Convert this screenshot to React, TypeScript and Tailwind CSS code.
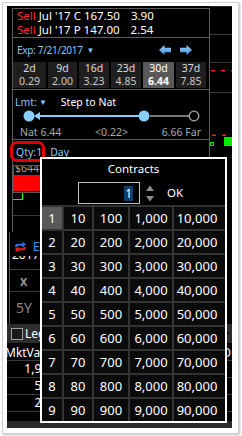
import React from 'react';

const DAYS = [
  { d: '2d', v: '0.29', w: 'w-[33px]' },
  { d: '9d', v: '2.00', w: 'w-[29px]' },
  { d: '16d', v: '3.23', w: 'w-[30px]' },
  { d: '23d', v: '4.85', w: 'w-[30px]' },
  { d: '30d', v: '6.44', w: 'w-[31px]', sel: true },
  { d: '37d', v: '7.85', w: 'w-[30px]' },
];

const ROWS = [1, 2, 3, 4, 5, 6, 7, 8, 9].map((n) => [n, n * 10, n * 100, n * 1000, n * 10000]);

function ExpArrow({ dir }: { dir: 'left' | 'right' }) {
  return (
    <svg width="12" height="10" viewBox="0 0 12 10" className={dir === 'right' ? 'scale-x-[-1]' : ''}>
      <defs>
        <linearGradient id={`ag-${dir}`} x1="0" y1="0" x2="0" y2="1">
          <stop offset="0" stopColor="#9fd3ff" />
          <stop offset="1" stopColor="#3d8fe0" />
        </linearGradient>
      </defs>
      <path d="M0 5 L5.5 0 V2.8 H12 V7.2 H5.5 V10 Z" fill={`url(#ag-${dir})`} />
    </svg>
  );
}

function Slider() {
  return (
    <svg width="196" height="12" viewBox="0 0 196 12" className="block">
      <line x1="26" y1="6" x2="131" y2="6" stroke="#87cefa" strokeWidth="2" />
      <path d="M21 6 L27 2 V10 Z" fill="#87cefa" />
      <circle cx="16" cy="6" r="5.5" fill="#87cefa" />
      <circle cx="131" cy="6" r="5.5" fill="#87cefa" />
      <line x1="137" y1="6" x2="176" y2="6" stroke="#a0a0a0" strokeWidth="1.5" />
      <circle cx="181" cy="6" r="4.8" fill="#000" stroke="#a8a8a8" strokeWidth="1.3" />
    </svg>
  );
}

function ChartStrip() {
  return (
    <svg width="22" height="157" viewBox="0 0 22 157" className="block">
      <line x1="0" y1="0.5" x2="22" y2="0.5" stroke="#2a2a2a" />
      <line x1="0" y1="28.5" x2="22" y2="28.5" stroke="#3a3a3a" />
      <line x1="0" y1="56.5" x2="22" y2="56.5" stroke="#3a3a3a" />
      <line x1="0" y1="86.5" x2="22" y2="86.5" stroke="#3a3a3a" />
      <rect x="1" y="64" width="4" height="1.5" fill="#ff1a1a" />
      <rect x="11" y="64" width="4" height="1.5" fill="#ff1a1a" />
      <rect x="21" y="64" width="1" height="1.5" fill="#ff1a1a" />
      <rect x="2" y="128.5" width="4" height="1.5" fill="#ff1a1a" />
      <rect x="12" y="128.5" width="4" height="1.5" fill="#ff1a1a" />
      <rect x="0.5" y="136.5" width="3" height="3" fill="none" stroke="#00e000" />
      <rect x="14" y="131" width="8" height="9" fill="#00ee00" />
    </svg>
  );
}

function SwapIcon() {
  return (
    <svg width="16" height="16" viewBox="0 0 16 16" className="block">
      <path d="M1.5 8 V6 Q1.5 3.8 3.8 3.8 H10.5 V1 L15 5 L10.5 9 V6.3 H4.5 Q4 6.3 4 7 V8 Z" fill="#2f6fe8" />
      <path d="M14.5 8 V10 Q14.5 12.2 12.2 12.2 H5.5 V15 L1 11 L5.5 7 V9.7 H11.5 Q12 9.7 12 9 V8 Z" fill="#ee1c1c" />
    </svg>
  );
}

function TopSection() {
  return (
    <div className="flex h-[157px]">
      <div className="w-[5px]" />
      <div className="w-[198px] mt-[2px] border-t border-x border-[#5c5c5c] flex flex-col">
        <div className="h-[29px] border-b border-[#5c5c5c] pl-[4px] flex flex-col text-[11.5px]">
          <div className="h-[14px] flex items-center">
            <span className="text-[#ff2a2a]">Sell</span>
            <span className="ml-[3px]">Jul '17 C 167.50</span>
            <span className="ml-[11px]">3.90</span>
          </div>
          <div className="h-[14px] flex items-center">
            <span className="text-[#ff2a2a]">Sell</span>
            <span className="ml-[3px]">Jul '17 P 147.00</span>
            <span className="ml-[11px]">2.54</span>
          </div>
        </div>

        <div className="h-[52px] border-b border-[#5c5c5c] pt-[5px]">
          <div className="h-[14px] flex items-center pl-[4px]">
            <span className="text-[#86c6f0] text-[10px] tracking-[-0.3px]">Exp: 7/21/2017</span>
            <span className="ml-[4px] text-[#86c6f0] text-[8px]">▼</span>
            <div className="ml-auto mr-[17px] flex items-center gap-[9px]">
              <ExpArrow dir="left" />
              <ExpArrow dir="right" />
            </div>
          </div>
          <div className="mt-[5px] flex gap-[2px]">
            {DAYS.map((b) => (
              <div
                key={b.d}
                className={`${b.w} h-[26px] flex flex-col items-center ${
                  b.sel ? 'bg-[#5a5a5a]' : 'bg-[#1f1f1f]'
                }`}
              >
                <span className={`leading-[13px] ${b.sel ? 'text-white' : 'text-[#dcdcdc]'}`}>{b.d}</span>
                <span
                  className={`leading-[13px] ${b.sel ? 'text-white font-bold' : 'text-[#c8c8c8]'}`}
                >
                  {b.v}
                </span>
              </div>
            ))}
          </div>
        </div>

        <div className="h-[50px] border-b border-[#5c5c5c] pt-[5px]">
          <div className="h-[14px] flex items-center pl-[2px]">
            <span className="text-[#86c6f0]">Lmt:</span>
            <span className="ml-[2px] text-[#86c6f0] text-[8px]">▼</span>
            <span className="ml-[14px] text-white">Step to Nat</span>
          </div>
          <div className="mt-[1px]">
            <Slider />
          </div>
          <div className="mt-[3px] h-[14px] flex items-center justify-between pl-[7px] pr-[8px] text-[#a8a8a8]">
            <span>Nat 6.44</span>
            <span>&lt;0.22&gt;</span>
            <span>6.66 Far</span>
          </div>
        </div>

        <div className="pt-[5px]">
          <div className="relative h-[14px] flex items-center pl-[3px] text-[#86c6f0]">
            <span>Qty:1</span>
            <span className="ml-[8px]">Day</span>
            <div className="absolute left-[-3px] top-[-4px] w-[35px] h-[21px] border-[3px] border-[#e00000] rounded-[7px]" />
          </div>
        </div>
      </div>
      <ChartStrip />
    </div>
  );
}

function MiddleSection() {
  return (
    <div className="h-[161px] flex flex-col">
      <div className="h-[69px] ml-[5px] border-l border-[#5c5c5c] flex flex-col">
        <div className="mt-[2px] h-[28px] w-[28px] border border-[#555] overflow-hidden">
          <div className="h-[9px] overflow-hidden">
            <div className="-mt-[5px] pl-[1px] text-[#a0a0a0] leading-[14px] whitespace-nowrap">$644</div>
          </div>
          <div className="h-[16px] bg-[#ff0000]" />
        </div>
        <svg width="28" height="22" viewBox="0 0 28 22" className="block">
          <path d="M0 6.5 H9.5 V0" fill="none" stroke="#00ff00" strokeWidth="1.2" />
        </svg>
        <div className="w-[28px] flex-1 border-t border-[#3a3a3a]" />
      </div>
      <div className="flex-1 w-[31px] ml-[2px] border-l border-[#5c5c5c] flex flex-col">
        <div className="h-[24px] pt-[7px] pl-[4px] flex items-start overflow-hidden">
          <SwapIcon />
          <span className="ml-[6px] text-[#3d8fe8] text-[13px] leading-[14px]">E</span>
        </div>
        <div className="h-[6px] overflow-hidden pl-[2px]">
          <div className="-mt-[8px] leading-[14px] text-white text-[12px]">2017</div>
        </div>
        <div className="h-[8px] border-b border-[#3a3a3a]" />
        <div className="h-[22px] border-b border-[#3a3a3a] flex items-center pl-[10px] pt-[2px] text-[#9a9a9a] text-[11px] font-bold">
          X
        </div>
        <div className="flex-1 pl-[6px] pt-[8px] text-[#8a8a8a] text-[14px] leading-[16px]">5Y</div>
      </div>
    </div>
  );
}

function LegHeader() {
  return (
    <div className="h-[19px] bg-[#2d2d2d] flex items-center pl-[4px] pr-[1px]">
      <div className="w-[12px] h-[12px] border border-[#a0a0a0] bg-[#1a1a1a]" />
      <span className="ml-[2px] text-white text-[12px]">Leg</span>
      <span className="ml-auto text-[#111] text-[7px]">▼</span>
    </div>
  );
}

function MktTable() {
  const vals = ['1,944', '512', '287'];
  return (
    <div className="h-[78px] flex flex-col">
      <div className="h-[18px] border-b border-[#3a3a3a] flex items-end pb-[1px] pr-[1px]">
        <div className="w-[33px] overflow-hidden">
          <span className="block -ml-[2px] text-white text-[12px] whitespace-nowrap">MktVal</span>
        </div>
        <span className="ml-auto text-white text-[12px]">D</span>
      </div>
      {vals.map((v) => (
        <div key={v} className="h-[17px] border-b border-[#3a3a3a] flex items-center">
          <div className="w-[33px] overflow-hidden">
            <span className="block w-[48px] text-right text-white text-[12px]">{v}</span>
          </div>
        </div>
      ))}
      <div className="flex-1" />
    </div>
  );
}

function ContractsPopup() {
  return (
    <div className="absolute left-[33px] top-[151px] w-[187px] h-[266px] border-2 border-white bg-black text-white">
      <div className="mt-[2px] h-[16px] text-center text-[11.5px] leading-[16px]">Contracts</div>
      <div className="mt-[5px] h-[22px] flex items-center">
        <div className="ml-[36px] w-[62px] h-[22px] border border-[#c0c0c0] bg-black flex items-center justify-end pr-[6px]">
          <span className="bg-[#0f3d6d] text-white text-[12px] leading-[15px] px-[1px]">1</span>
        </div>
        <svg width="8" height="17" viewBox="0 0 8 17" className="ml-[6px] block">
          <path d="M0 6 L4 0.5 L8 6 Z" fill="#8c8c8c" />
          <path d="M0 11 L4 16.5 L8 11 Z" fill="#8c8c8c" />
        </svg>
        <span className="ml-[13px] text-[11.5px]">OK</span>
      </div>
      <div className="mt-[1px] bg-[#333333] pt-[2px] grid grid-cols-[20px_28px_34px_42px_51px] gap-[2px]">
        {ROWS.map((row, ri) =>
          row.map((n, ci) => (
            <div
              key={`${ri}-${ci}`}
              className={`h-[22px] flex items-center justify-center text-[13px] ${
                ri === 0 && ci === 0 ? 'bg-[#595959]' : 'bg-[#0a0a0a]'
              } ${ci === 4 ? 'pr-[5px]' : ''}`}
            >
              {n.toLocaleString('en-US')}
            </div>
          ))
        )}
      </div>
    </div>
  );
}

export default function App() {
  return (
    <div className="w-[242px] h-[436px] bg-white pl-[2px] pt-[2px] font-['Noto_Sans',sans-serif] text-[10.5px] leading-none">
      <div className="w-[237px] h-[432px] border border-[#d0d0d0] shadow-[1px_1px_2px_rgba(0,0,0,0.25)] pl-[4px] pt-[3px]">
        <div className="relative w-[225px] h-[422px] bg-black overflow-hidden text-white">
          <TopSection />
          <MiddleSection />
          <LegHeader />
          <MktTable />
          <div className="h-[7px] bg-[#2b2b2b]" />
          <ContractsPopup />
        </div>
      </div>
    </div>
  );
}
